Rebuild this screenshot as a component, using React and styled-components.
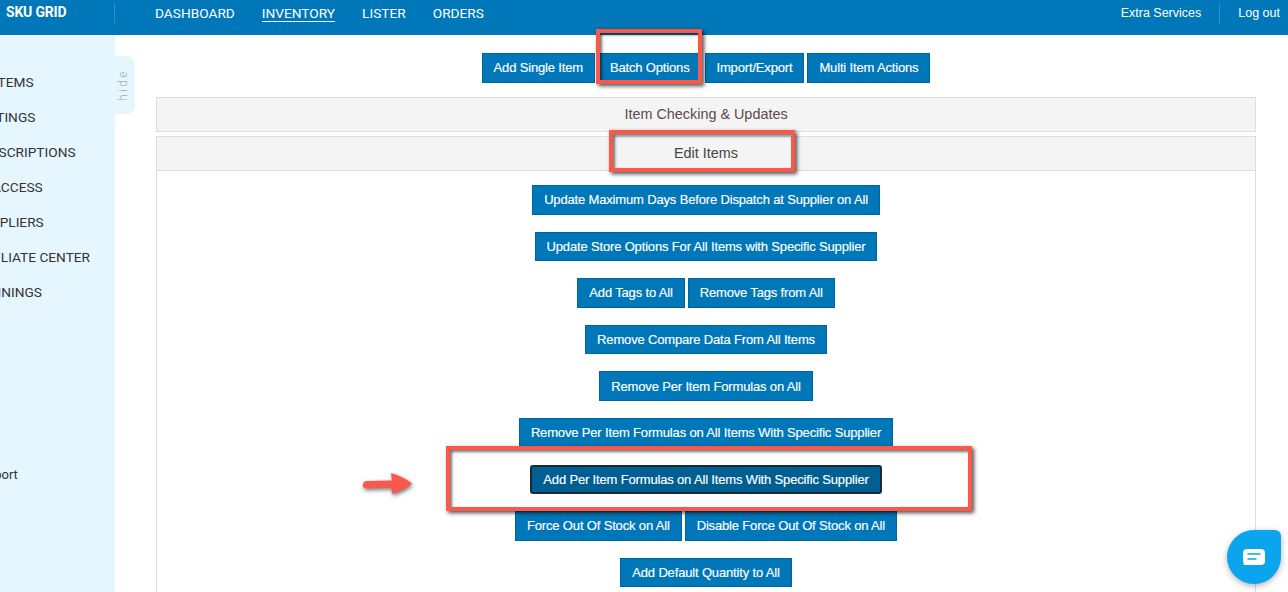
import React from 'react';
import styled, { createGlobalStyle } from 'styled-components';

const GlobalStyle = createGlobalStyle`
  html, body {
    margin: 0;
    height: 100%;
    overflow: hidden;
    background: #fff;
    font-family: 'Liberation Sans', Arial, sans-serif;
  }
`;

const sideItems = [
  { label: 'ITEMS', shift: 6 },
  { label: 'LISTINGS', shift: 23 },
  { label: 'SUBSCRIPTIONS', shift: 27 },
  { label: 'ACCESS', shift: 8 },
  { label: 'SUPPLIERS', shift: 26 },
  { label: 'AFFILIATE CENTER', shift: 27 },
  { label: 'TRAININGS', shift: 28 },
];

const rows = [
  ['Update Maximum Days Before Dispatch at Supplier on All'],
  ['Update Store Options For All Items with Specific Supplier'],
  ['Add Tags to All', 'Remove Tags from All'],
  ['Remove Compare Data From All Items'],
  ['Remove Per Item Formulas on All'],
  ['Remove Per Item Formulas on All Items With Specific Supplier'],
  ['Add Per Item Formulas on All Items With Specific Supplier'],
  ['Force Out Of Stock on All', 'Disable Force Out Of Stock on All'],
  ['Add Default Quantity to All'],
];

const App = () => {
  return (
    <Page>
      <GlobalStyle />
      <Header>
        <Logo>SKU GRID</Logo>
        <NavLinks>
          <NavLink>DASHBOARD</NavLink>
          <NavLink $active>INVENTORY</NavLink>
          <NavLink>LISTER</NavLink>
          <NavLink>ORDERS</NavLink>
        </NavLinks>
        <HeaderRight>
          <HeaderAction>Extra Services</HeaderAction>
          <HeaderAction $divided>Log out</HeaderAction>
        </HeaderRight>
      </Header>
      <Body>
        <Sidebar>
          <SideList>
            {sideItems.map((item) => (
              <SideItem key={item.label} $shift={item.shift}>
                {item.label}
              </SideItem>
            ))}
          </SideList>
          <SideSupport>Support</SideSupport>
        </Sidebar>
        <HideTab>
          <HideLabel>hide</HideLabel>
        </HideTab>
        <Main>
          <TopActions>
            <ActionButton>Add Single Item</ActionButton>
            <ActionButton>Batch Options</ActionButton>
            <ActionButton>Import/Export</ActionButton>
            <ActionButton>Multi Item Actions</ActionButton>
          </TopActions>
          <CollapsedPanel>Item Checking &amp; Updates</CollapsedPanel>
          <Panel>
            <PanelTitle>Edit Items</PanelTitle>
            <PanelBody>
              {rows.map((row) => (
                <ButtonRow key={row[0]}>
                  {row.map((label) => (
                    <ActionButton key={label} $focused={label.startsWith('Add Per')}>
                      {label}
                    </ActionButton>
                  ))}
                </ButtonRow>
              ))}
            </PanelBody>
          </Panel>
        </Main>
      </Body>
      <Callout $left={596} $top={29} $width={106} $height={55} />
      <Callout $left={609} $top={130} $width={186} $height={42} />
      <Callout $left={446} $top={446} $width={526} $height={65} />
      <Arrow viewBox="0 0 54 26">
        <path
          d="M1 14c0-2.500 1.500-4 4-4l25-.5-1-7.500c7 2 14 5 21 10.500-6 5-13 8-20 10.500l-.5-6.500-24.500.8c-2.500 0-4.500-.8-4.500-3.300z"
          fill="#f9584b"
        />
      </Arrow>
      <ChatBubble>
        <svg width="22" height="16" viewBox="0 0 22 16">
          <path
            d="M4 0h14a4 4 0 0 1 4 4v8a4 4 0 0 1-4 4H1.500a1 1 0 0 1-.8-1.600C1 13.900 0 13 0 12V4a4 4 0 0 1 4-4z"
            fill="#fff"
          />
          <path d="M5 5h12M5 10h8" stroke="#0aa5ec" strokeWidth="1.500" strokeLinecap="round" />
        </svg>
      </ChatBubble>
    </Page>
  );
};
export default App;

const Page = styled.div`
  position: relative;
  width: 1288px;
  height: 592px;
  overflow: hidden;
`;
const Header = styled.header`
  display: flex;
  height: 35px;
  padding-bottom: 9px;
  box-sizing: border-box;
  align-items: center;
  background: #0077b8;
  color: #fff;
  font-family: Roboto, sans-serif;
  font-size: 13.7px;
`;
const Logo = styled.div`
  width: 108px;
  height: 20px;
  margin-left: 6px;
  border-right: 1px solid #2a93cf;
  font-size: 14px;
  font-weight: 700;
  letter-spacing: -0.2px;
  line-height: 18px;
`;
const NavLinks = styled.nav`
  display: flex;
  gap: 27px;
  margin-left: 40px;
`;
const NavLink = styled.a`
  line-height: 16px;
  border-bottom: 1px solid ${(p) => (p.$active ? '#fff' : 'transparent')};
`;
const HeaderRight = styled.div`
  display: flex;
  margin-left: auto;
  margin-right: 8px;
  font-family: 'Liberation Sans', Arial, sans-serif;
  font-size: 12.5px;
`;
const HeaderAction = styled.a`
  line-height: 20px;
  ${(p) =>
    p.$divided &&
    `
    margin-left: 18px;
    padding-left: 18px;
    border-left: 1px solid #2a93cf;
  `}
`;
const Body = styled.div`
  position: relative;
  display: flex;
  height: 557px;
`;
const Sidebar = styled.aside`
  flex: none;
  width: 115px;
  overflow: hidden;
  background: #e6f6ff;
  color: #333;
  font-family: Roboto, sans-serif;
  font-size: 13.7px;
`;
const SideList = styled.ul`
  display: flex;
  flex-direction: column;
  gap: 19px;
  margin: 39px 0 0;
  padding: 0;
  list-style: none;
  white-space: nowrap;
`;
const SideItem = styled.li`
  height: 16px;
  line-height: 16px;
  margin-left: -${(p) => p.$shift}px;
`;
const SideSupport = styled.div`
  margin: 167px 0 0 -28px;
  font-size: 13px;
  line-height: 16px;
  white-space: nowrap;
`;
const HideTab = styled.div`
  position: absolute;
  top: 21px;
  left: 115px;
  display: flex;
  align-items: center;
  justify-content: center;
  width: 20px;
  height: 58px;
  padding-right: 4px;
  box-sizing: border-box;
  border-radius: 0 8px 8px 0;
  background: #e6f6ff;
`;
const HideLabel = styled.span`
  color: #aaa;
  font-family: Roboto, sans-serif;
  font-size: 12px;
  font-weight: 300;
  letter-spacing: 2.5px;
  transform: rotate(-90deg);
`;
const Main = styled.main`
  display: flex;
  flex: 1;
  flex-direction: column;
  min-width: 0;
  padding: 18px 32px 0 41px;
`;
const TopActions = styled.div`
  display: flex;
  justify-content: center;
  gap: 3px;
  margin-bottom: 14.5px;
`;
const ActionButton = styled.button`
  flex: none;
  box-sizing: border-box;
  height: 29.5px;
  padding: 0 11px;
  border: ${(p) => (p.$focused ? '2px solid #1a2a33' : '1px solid #00659d')};
  border-radius: ${(p) => (p.$focused ? '3px' : '0')};
  background: ${(p) => (p.$focused ? '#005f92' : '#0077b8')};
  color: #fff;
  font-family: 'Liberation Sans', Arial, sans-serif;
  font-size: 13px;
  font-weight: 400;
  letter-spacing: -0.16px;
  -webkit-text-stroke: 0.15px #fff;
`;
const CollapsedPanel = styled.div`
  box-sizing: border-box;
  height: 35px;
  margin-bottom: 4px;
  border: 1px solid #ddd;
  background: #f4f4f4;
  color: #5a4a4a;
  font-size: 14.4px;
  line-height: 33px;
  text-align: center;
`;
const Panel = styled.section`
  flex: 1;
  border: 1px solid #ddd;
  border-bottom: 0;
`;
const PanelTitle = styled.div`
  height: 33px;
  border-bottom: 1px solid #ddd;
  background: #f4f4f4;
  color: #444;
  font-size: 14.4px;
  line-height: 33px;
  text-align: center;
`;
const PanelBody = styled.div`
  display: flex;
  flex-direction: column;
  gap: 17.1px;
  padding-top: 14px;
`;
const ButtonRow = styled.div`
  display: flex;
  justify-content: center;
  gap: 3px;
`;
const Callout = styled.div`
  position: absolute;
  top: ${(p) => p.$top}px;
  left: ${(p) => p.$left}px;
  box-sizing: border-box;
  width: ${(p) => p.$width}px;
  height: ${(p) => p.$height}px;
  border: 4px solid #f9584b;
  box-shadow: 2px 2px 4px rgba(0, 0, 0, 0.7), inset 2px 2px 3px rgba(0, 0, 0, 0.55);
`;
const Arrow = styled.svg`
  position: absolute;
  top: 471px;
  left: 362px;
  width: 54px;
  height: 26px;
  filter: drop-shadow(1px 2px 2px rgba(0, 0, 0, 0.55));
`;
const ChatBubble = styled.div`
  position: absolute;
  top: 530px;
  left: 1227px;
  display: flex;
  align-items: center;
  justify-content: center;
  width: 54px;
  height: 54px;
  border-radius: 50% 6px 50% 50%;
  background: #0aa5ec;
  box-shadow: 0 2px 6px rgba(0, 0, 0, 0.3);
`;
